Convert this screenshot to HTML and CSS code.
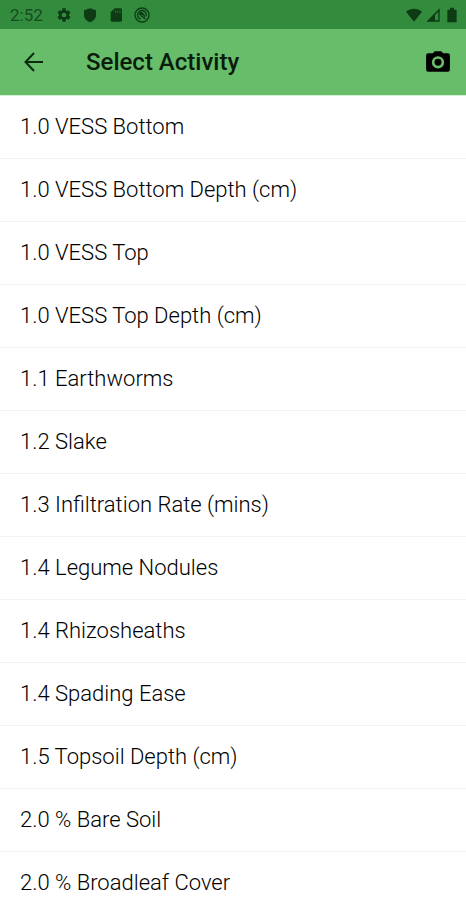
FILE: index.html
```html
<!DOCTYPE html>
<html lang="en">
<head>
<meta charset="utf-8">
<meta name="viewport" content="width=device-width, initial-scale=1">
<title>Select Activity</title>
<link rel="stylesheet" href="styles.css">
</head>
<body>
<div class="status-bar">
  <time class="clock">2:52</time>
  <svg class="status-icon" viewBox="0 0 24 24" aria-hidden="true"><path fill-rule="evenodd" d="M19.4 13a7.500 7.500 0 0 0 0-2l2.300-1.800-2.400-4.200-2.800 1.100a8 8 0 0 0-1.700-1L14.400 2H9.600l-.4 3.100a8 8 0 0 0-1.700 1L4.700 5 2.300 9.200 4.600 11a7.500 7.500 0 0 0 0 2l-2.300 1.800L4.700 19l2.800-1.100a8 8 0 0 0 1.700 1l.4 3.100h4.800l.4-3.100a8 8 0 0 0 1.700-1l2.800 1.100 2.400-4.200zM12 15.500a3.500 3.500 0 1 1 0-7 3.500 3.500 0 0 1 0 7z"/></svg>
  <svg class="status-icon" viewBox="0 0 24 24" aria-hidden="true"><path d="M12 2 3 5v7c0 5 3.800 9.200 9 11 5.200-1.800 9-6 9-11V5z"/></svg>
  <svg class="status-icon" viewBox="0 0 24 24" aria-hidden="true"><path d="M19 2h-9L4 8v12a2 2 0 0 0 2 2h13a2 2 0 0 0 2-2V4a2 2 0 0 0-2-2z"/><path class="contacts" d="M11 5v4M14.500 5v4M18 5v4"/></svg>
  <svg class="status-icon" viewBox="0 0 24 24" aria-hidden="true"><circle class="ring" cx="12" cy="12" r="10.500"/><path class="ring" d="M10 18a6.500 6.500 0 1 1 8-4"/><path d="M9 7c4 0 8 4 8 9l-4-4-3 1-3-2z"/><path class="ring" d="M11 13l6 5"/></svg>
  <span class="status-system">
    <svg class="status-icon" viewBox="0 0 24 24" aria-hidden="true"><path d="M0 7C7 1 17 1 24 7L12 22z"/></svg>
    <svg class="status-icon" viewBox="0 0 24 24" aria-hidden="true"><path fill-rule="evenodd" d="M2 22 22 2v20zM15 20h5V7l-5 5z"/></svg>
    <svg class="status-icon" viewBox="0 0 24 24" aria-hidden="true"><path d="M6 4h3V1h6v3h3a1 1 0 0 1 1 1v17a1 1 0 0 1-1 1H6a1 1 0 0 1-1-1V5a1 1 0 0 1 1-1z"/></svg>
  </span>
</div>
<header class="app-bar">
  <button class="icon-button" type="button" aria-label="Back">
    <svg class="back-icon" viewBox="0 0 24 24" aria-hidden="true"><path d="M21 12H4M12 3 3.500 12l8.500 9"/></svg>
  </button>
  <h1 class="title">Select Activity</h1>
  <button class="icon-button" type="button" aria-label="Camera">
    <svg class="camera-icon" viewBox="0 0 24 24" aria-hidden="true"><path fill-rule="evenodd" d="M9 2 7.200 4H3a2 2 0 0 0-2 2v13a2 2 0 0 0 2 2h18a2 2 0 0 0 2-2V6a2 2 0 0 0-2-2h-4.200L15 2zm3 16a5.700 5.700 0 1 1 0-11.400 5.700 5.700 0 0 1 0 11.400z"/><circle cx="12" cy="12.300" r="3.200"/></svg>
  </button>
</header>
<main>
  <ul class="activities">
    <li><a href="#">1.0 VESS Bottom</a></li>
    <li><a href="#">1.0 VESS Bottom Depth (cm)</a></li>
    <li><a href="#">1.0 VESS Top</a></li>
    <li><a href="#">1.0 VESS Top Depth (cm)</a></li>
    <li><a href="#">1.1 Earthworms</a></li>
    <li><a href="#">1.2 Slake</a></li>
    <li><a href="#">1.3 Infiltration Rate (mins)</a></li>
    <li><a href="#">1.4 Legume Nodules</a></li>
    <li><a href="#">1.4 Rhizosheaths</a></li>
    <li><a href="#">1.4 Spading Ease</a></li>
    <li><a href="#">1.5 Topsoil Depth (cm)</a></li>
    <li><a href="#">2.0 % Bare Soil</a></li>
    <li><a href="#">2.0 % Broadleaf Cover</a></li>
  </ul>
</main>
</body>
</html>
```
FILE: styles.css
```css
* {
  box-sizing: border-box;
}

body {
  margin: 0;
  background: #fff;
  color: #000;
  font-family: Roboto, "Liberation Sans", sans-serif;
}

.status-bar {
  display: flex;
  align-items: center;
  gap: 10px;
  height: 29px;
  padding: 0 6px 0 10px;
  background: #338b3e;
  color: #164c1e;
}

.clock {
  margin-right: 3px;
  font-size: 17px;
  line-height: 20px;
}

.status-icon {
  width: 16px;
  height: 16px;
  fill: #0d3c14;
}

.contacts {
  stroke: #338b3e;
  stroke-width: 1;
}

.ring {
  fill: none;
  stroke: #0d3c14;
  stroke-width: 2;
}

.status-system {
  display: flex;
  gap: 3px;
  margin-left: auto;
}

.app-bar {
  display: flex;
  align-items: center;
  height: 67px;
  padding: 0 12px 0 18px;
  border-bottom: 1px solid #d4efd5;
  background: #68bd6b;
}

.icon-button {
  display: flex;
  align-items: center;
  justify-content: center;
  width: 32px;
  height: 48px;
  padding: 0;
  border: 0;
  background: none;
}

.back-icon {
  width: 24px;
  height: 24px;
  fill: none;
  stroke: #0b2a0d;
  stroke-width: 2;
}

.camera-icon {
  width: 26px;
  height: 26px;
  fill: #000;
}

.title {
  flex: 1;
  margin: 0 0 0 36px;
  color: #0a1c0a;
  font-size: 24px;
  font-weight: 500;
  line-height: 32px;
}

.activities {
  margin: 0;
  padding: 0;
  list-style: none;
}

.activities a {
  display: block;
  padding: 16px 20px;
  border-bottom: 1px solid #f3f3f3;
  color: inherit;
  font-size: 22px;
  font-weight: 300;
  line-height: 30px;
  text-decoration: none;
}
```
